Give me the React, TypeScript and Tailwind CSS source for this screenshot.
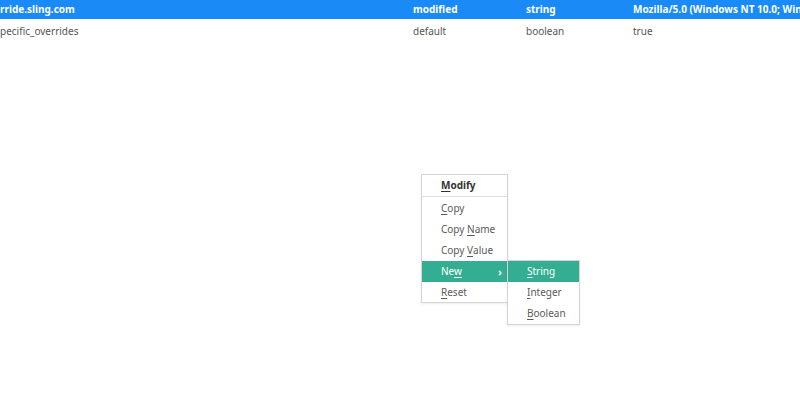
export default function App() {
  const font = { fontFamily: '"Noto Sans", "Open Sans", sans-serif' };
  return (
    <div
      className="relative h-[400px] w-[800px] overflow-hidden bg-white text-[10px]"
      style={font}
    >
      {/* Table */}
      <div className="flex h-[19px] items-center bg-[#1a8bf6] font-bold text-white">
        <div className="w-[413px] shrink-0 whitespace-nowrap">rride.sling.com</div>
        <div className="w-[113px] shrink-0">modified</div>
        <div className="w-[107px] shrink-0">string</div>
        <div className="whitespace-nowrap">Mozilla/5.0 (Windows NT 10.0; Win64; x64)</div>
      </div>
      <div className="flex h-[24px] items-center text-[#555]">
        <div className="w-[413px] shrink-0 whitespace-nowrap">pecific_overrides</div>
        <div className="w-[113px] shrink-0">default</div>
        <div className="w-[107px] shrink-0">boolean</div>
        <div>true</div>
      </div>

      {/* Context menu */}
      <div className="absolute left-[421px] top-[174px] w-[87px] border border-[#d4d4d4] bg-white text-[#5a5a5a] shadow-[0_1px_2px_rgba(0,0,0,0.08)]">
        <div className="flex h-[22px] items-center border-b border-[#dedede] pl-[19px] font-bold text-[#333]">
          <span className="underline underline-offset-2">M</span>odify
        </div>
        <div className="pt-[1px]">
          <div className="flex h-[21px] items-center pl-[19px]">
            <span className="underline underline-offset-2">C</span>opy
          </div>
          <div className="flex h-[21px] items-center pl-[19px]">
            Copy&nbsp;<span className="underline underline-offset-2">N</span>ame
          </div>
          <div className="flex h-[21px] items-center pl-[19px]">
            Copy&nbsp;<span className="underline underline-offset-2">V</span>alue
          </div>
          <div className="relative flex h-[21px] items-center justify-between bg-[#34ae92] pl-[19px] pr-[5px] text-white">
            <span>
              Ne<span className="underline underline-offset-2">w</span>
            </span>
            <span className="text-[11px] font-bold leading-none">›</span>

            {/* Submenu */}
            <div className="absolute left-[85px] top-[-1px] w-[73px] border border-[#d4d4d4] bg-white text-[#5a5a5a] shadow-[0_1px_2px_rgba(0,0,0,0.08)]">
              <div className="flex h-[21px] items-center bg-[#34ae92] pl-[19px] text-white">
                <span className="underline underline-offset-2">S</span>tring
              </div>
              <div className="flex h-[21px] items-center pl-[19px]">
                <span className="underline underline-offset-2">I</span>nteger
              </div>
              <div className="flex h-[21px] items-center pl-[19px]">
                <span className="underline underline-offset-2">B</span>oolean
              </div>
            </div>
          </div>
          <div className="flex h-[20px] items-center pl-[19px]">
            <span className="underline underline-offset-2">R</span>eset
          </div>
        </div>
      </div>
    </div>
  );
}
